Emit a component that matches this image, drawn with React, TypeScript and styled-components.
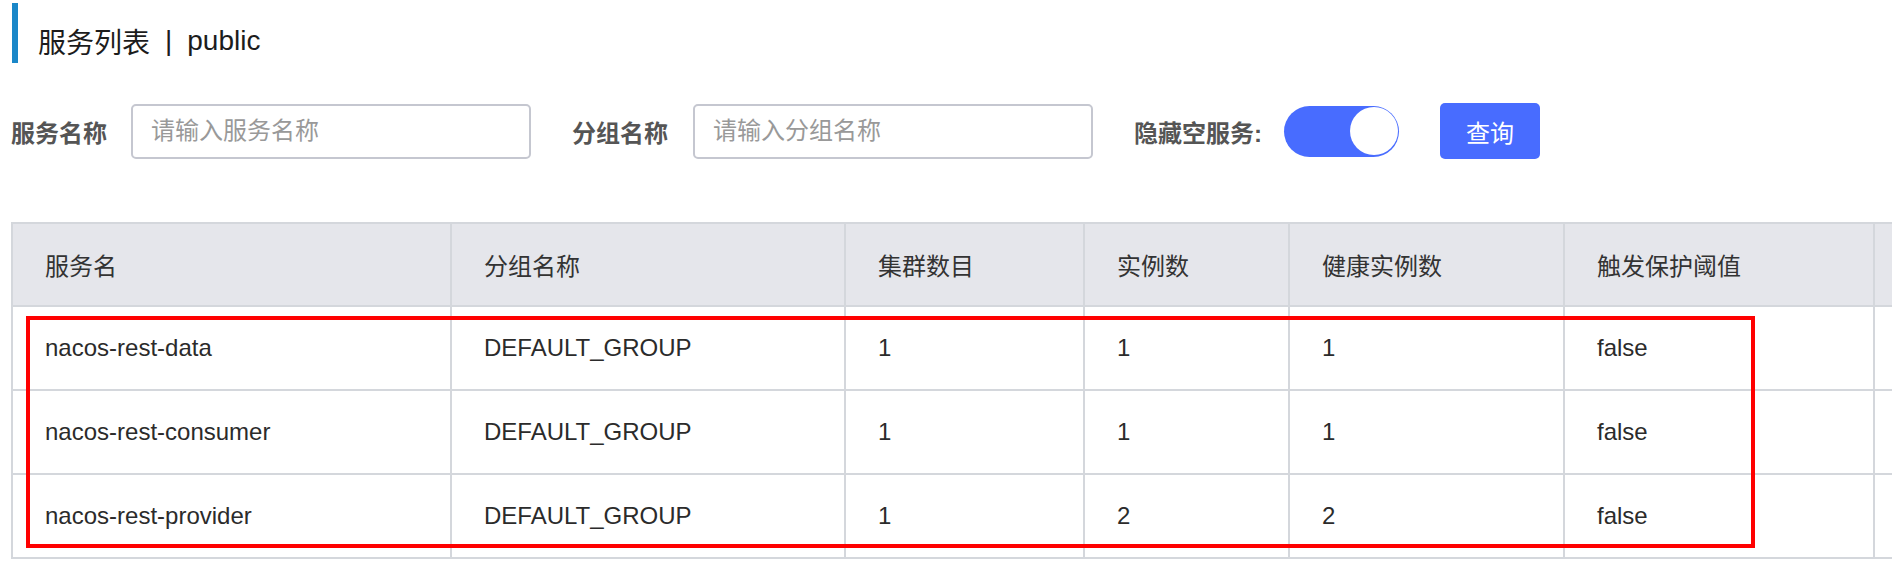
import React from 'react'
import styled, { createGlobalStyle } from 'styled-components'

type Service = {
  name: string
  group: string
  clusters: number
  instances: number
  healthy: number
  threshold: string
}

const services: Service[] = [
  { name: 'nacos-rest-data', group: 'DEFAULT_GROUP', clusters: 1, instances: 1, healthy: 1, threshold: 'false' },
  { name: 'nacos-rest-consumer', group: 'DEFAULT_GROUP', clusters: 1, instances: 1, healthy: 1, threshold: 'false' },
  { name: 'nacos-rest-provider', group: 'DEFAULT_GROUP', clusters: 1, instances: 2, healthy: 2, threshold: 'false' },
]

const columns = ['服务名', '分组名称', '集群数目', '实例数', '健康实例数', '触发保护阈值', '']

const BLUE = '#486cff'
const LINE = '#d4d7dc'

const GlobalStyle = createGlobalStyle`
  html, body {
    margin: 0;
    padding: 0;
    overflow: hidden;
    background: #fff;
  }
  body {
    font-family: "Liberation Sans", "Noto Sans CJK SC", sans-serif;
    color: #333;
  }
`

const Page = styled.div`
  padding: 3px 0 0 11px;
`

const PageTitle = styled.h1`
  margin: 0 0 0 1px;
  height: 60px;
  box-sizing: border-box;
  border-left: 6px solid #1a87c8;
  padding: 15px 0 0 20px;
  display: flex;
  align-items: center;
  gap: 15px;
  font-size: 28px;
  font-weight: normal;
  color: #1c1c1c;
`

const FilterRow = styled.div`
  margin-top: 40px;
  display: flex;
  align-items: center;
  gap: 41px;
`

const FilterItem = styled.div<{ $gap?: number }>`
  display: flex;
  align-items: center;
  gap: ${(p) => p.$gap ?? 24}px;
`

const Label = styled.label`
  font-size: 24px;
  font-weight: bold;
  color: #555;
  white-space: nowrap;
`

const TextInput = styled.input`
  width: 400px;
  height: 55px;
  box-sizing: border-box;
  border: 2px solid #c5c7d0;
  border-radius: 5px;
  padding: 0 18px;
  font-family: inherit;
  font-size: 24px;
  color: #333;
  outline: none;

  &::placeholder {
    color: #999;
  }
`

const Switch = styled.button<{ $on: boolean }>`
  width: 115px;
  height: 51px;
  border: none;
  border-radius: 26px;
  padding: 0 1px;
  display: flex;
  align-items: center;
  justify-content: ${(p) => (p.$on ? 'flex-end' : 'flex-start')};
  background: ${(p) => (p.$on ? BLUE : '#d9dbe0')};
  cursor: pointer;
`

const Knob = styled.span`
  width: 48px;
  height: 48px;
  border-radius: 50%;
  background: #fff;
`

const QueryButton = styled.button`
  width: 100px;
  height: 56px;
  border: none;
  border-radius: 5px;
  background: ${BLUE};
  color: #fff;
  font-family: inherit;
  font-size: 24px;
  cursor: pointer;
`

const TableWrap = styled.div`
  position: relative;
  margin-top: 63px;
  width: max-content;
`

const Grid = styled.div`
  display: grid;
  grid-template-columns: 439px 394px 239px 205px 275px 310px 300px;
  border-left: 2px solid ${LINE};
  border-top: 2px solid ${LINE};
`

const HeadCell = styled.div`
  height: 83px;
  box-sizing: border-box;
  padding-left: 32px;
  display: flex;
  align-items: center;
  background: #e5e6eb;
  border-right: 2px solid ${LINE};
  border-bottom: 2px solid ${LINE};
  font-size: 24px;
  color: #333;
`

const Cell = styled.div`
  height: 84px;
  box-sizing: border-box;
  padding-left: 32px;
  display: flex;
  align-items: center;
  background: #fff;
  border-right: 2px solid ${LINE};
  border-bottom: 2px solid ${LINE};
  font-size: 24px;
  color: #2b2b2b;
`

// annotation frame drawn over the data rows
const Highlight = styled.div`
  position: absolute;
  left: 15px;
  top: 94px;
  width: 1729px;
  height: 232px;
  box-sizing: border-box;
  border: 4px solid #ff0000;
  pointer-events: none;
`

export default function App() {
  return (
    <Page>
      <GlobalStyle />
      <PageTitle>
        <span>服务列表</span>
        <span>|</span>
        <span>public</span>
      </PageTitle>

      <FilterRow>
        <FilterItem>
          <Label>服务名称</Label>
          <TextInput placeholder="请输入服务名称" />
        </FilterItem>
        <FilterItem $gap={25}>
          <Label>分组名称</Label>
          <TextInput placeholder="请输入分组名称" />
        </FilterItem>
        <FilterItem $gap={22}>
          <Label>隐藏空服务:</Label>
          <Switch $on={true} aria-pressed="true">
            <Knob />
          </Switch>
        </FilterItem>
        <QueryButton>查询</QueryButton>
      </FilterRow>

      <TableWrap>
        <Grid>
          {columns.map((c, i) => (
            <HeadCell key={i}>{c}</HeadCell>
          ))}
          {services.map((s) => (
            <React.Fragment key={s.name}>
              <Cell>{s.name}</Cell>
              <Cell>{s.group}</Cell>
              <Cell>{s.clusters}</Cell>
              <Cell>{s.instances}</Cell>
              <Cell>{s.healthy}</Cell>
              <Cell>{s.threshold}</Cell>
              <Cell />
            </React.Fragment>
          ))}
        </Grid>
        <Highlight />
      </TableWrap>
    </Page>
  )
}
